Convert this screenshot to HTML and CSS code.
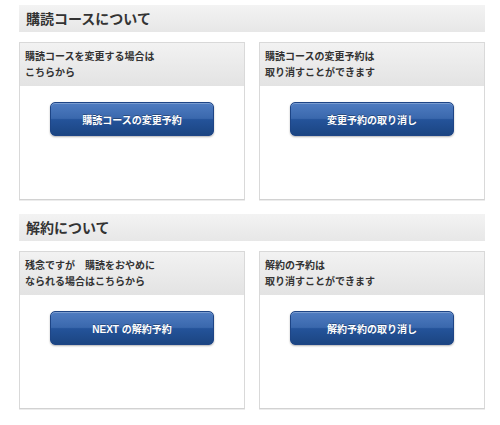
FILE: index.html
```html
<!DOCTYPE html>
<html lang="ja">

<head>
    <meta charset="UTF-8">
    <meta name="viewport" content="width=device-width, initial-scale=1.0">
    <title>購読コース</title>
    <link rel="stylesheet" href="styles.css">
</head>

<body>
    <section class="block">
        <h2 class="block-title">購読コースについて</h2>
        <div class="card-row">
            <div class="card">
                <div class="card-head">購読コースを変更する場合は<br>こちらから</div>
                <div class="card-body">
                    <a class="blue-button" href="#">購読コースの変更予約</a>
                </div>
            </div>
            <div class="card">
                <div class="card-head">購読コースの変更予約は<br>取り消すことができます</div>
                <div class="card-body">
                    <a class="blue-button" href="#">変更予約の取り消し</a>
                </div>
            </div>
        </div>
    </section>

    <section class="block">
        <h2 class="block-title">解約について</h2>
        <div class="card-row">
            <div class="card">
                <div class="card-head">残念ですが　購読をおやめに<br>なられる場合はこちらから</div>
                <div class="card-body">
                    <a class="blue-button" href="#">NEXT の解約予約</a>
                </div>
            </div>
            <div class="card">
                <div class="card-head">解約の予約は<br>取り消すことができます</div>
                <div class="card-body">
                    <a class="blue-button" href="#">解約予約の取り消し</a>
                </div>
            </div>
        </div>
    </section>
</body>

</html>
```

FILE: styles.css
```css
body {
    margin: 5px 15px 0 19px;
    background-color: #ffffff;
    font-family: 'Liberation Sans', 'Noto Sans CJK JP', sans-serif;
    color: #333333;
}

.block {
    margin-bottom: 14px;
}

.block-title {
    margin: 0 0 10px 0;
    height: 27px;
    padding: 0 7px;
    font-size: 14px;
    font-weight: bold;
    line-height: 28px;
    color: #333333;
    background: linear-gradient(#f3f3f3, #e7e7e7);
}

.card-row {
    display: grid;
    grid-template-columns: 1fr 1fr;
    gap: 14px;
}

.card {
    box-sizing: border-box;
    height: 158px;
    border: 1px solid #d9d9d9;
    border-bottom-color: #d2d2d2;
    box-shadow: 0 1px 0 #ececec;
}

.card-head {
    padding: 6px 5px 5px;
    font-size: 10px;
    font-weight: bold;
    line-height: 16px;
    color: #333333;
    background: linear-gradient(#f2f2f2, #e3e3e3);
}

.card-body {
    padding-top: 16px;
    display: flex;
    justify-content: center;
}

.blue-button {
    box-sizing: border-box;
    width: 164px;
    height: 34px;
    border: 1px solid #1e4586;
    border-radius: 5px;
    background: linear-gradient(#4f7cc1 0%, #3a68ad 48%, #24539a 52%, #1b4582 100%);
    box-shadow: 0 1px 2px rgba(0, 0, 0, 0.3), inset 0 1px 0 rgba(255, 255, 255, 0.25);
    color: #ffffff;
    font-size: 10px;
    font-weight: bold;
    text-decoration: none;
    display: flex;
    align-items: center;
    justify-content: center;
    text-shadow: 0 -1px 0 rgba(0, 0, 0, 0.3);
}
```
